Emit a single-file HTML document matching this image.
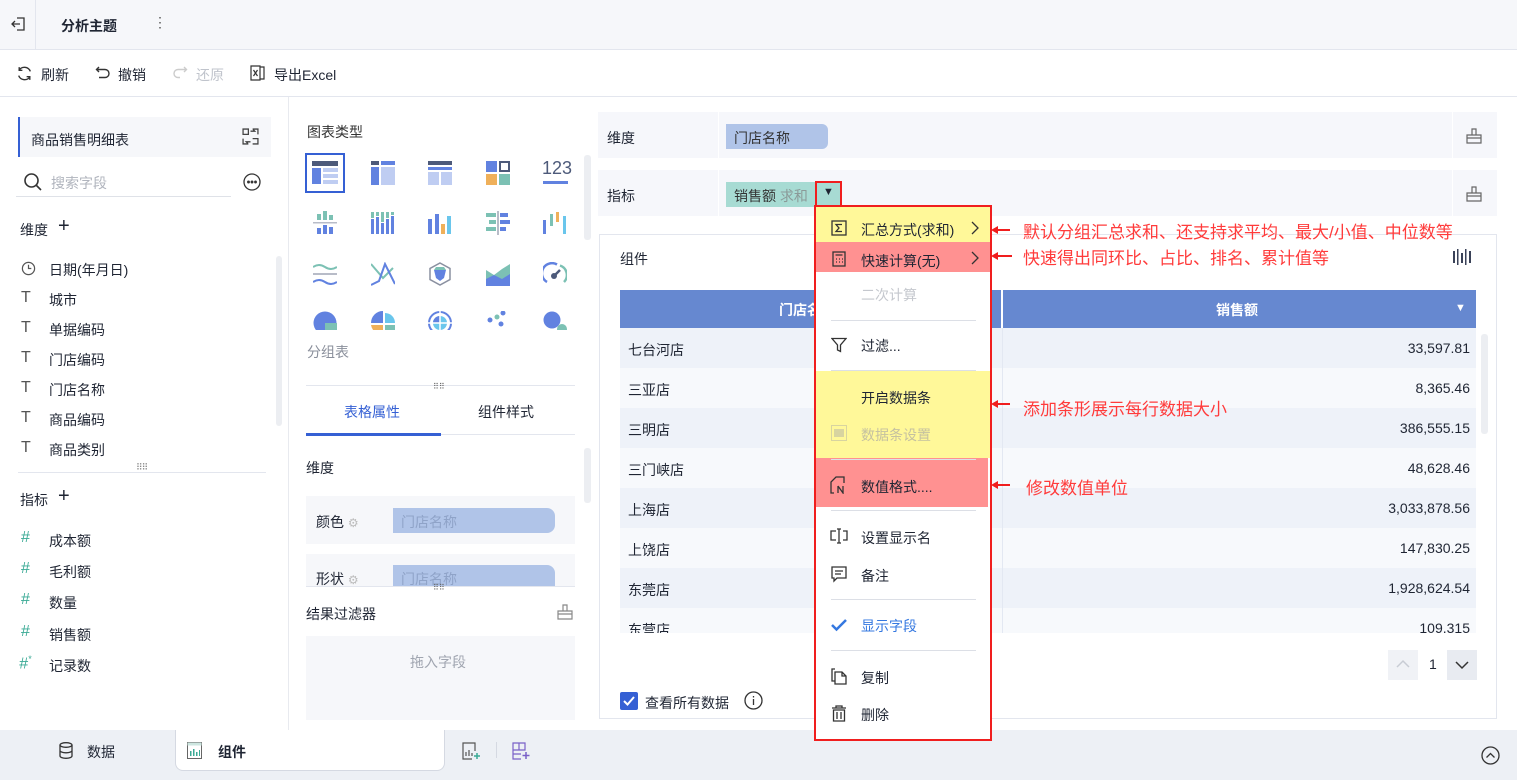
<!DOCTYPE html>
<html><head><meta charset="utf-8"><style>
*{box-sizing:border-box;margin:0;padding:0}
body{width:1517px;height:780px;overflow:hidden;background:#fff;font-family:"Liberation Sans","Noto Sans CJK SC",sans-serif;font-size:14px;color:#1f2533;position:relative}
.a{position:absolute}
.t{position:absolute;white-space:nowrap}
.ic{position:absolute}
</style></head><body>
<!-- top bar -->
<div class="a" style="left:0;top:0;width:1517px;height:50px;background:#f6f7fa;border-bottom:1px solid #e3e6ee"></div>
<div class="a" style="left:35px;top:0;width:1px;height:50px;background:#e3e6ee"></div>
<svg class="ic" style="left:11px;top:16px" width="16" height="16" viewBox="0 0 16 16" fill="none" stroke="#333" stroke-width="1.3"><path d="M6 2h7v12H6M1 8h8M4 5L1 8l3 3"/></svg>
<div class="t" style="left:61px;top:16px;font-weight:bold;font-size:14px">分析主题</div>
<div class="t" style="left:153px;top:14px;font-size:14px;color:#555">⋮</div>
<!-- toolbar -->
<div class="a" style="left:0;top:96px;width:1517px;height:1px;background:#e3e6ee"></div>
<svg class="ic" style="left:16px;top:65px" width="17" height="17" viewBox="0 0 16 16" fill="none" stroke="#333" stroke-width="1.3"><path d="M13.5 6A6 6 0 0 0 2.8 5M2.5 10a6 6 0 0 0 10.7 1M3 2v3h3M13 14v-3h-3"/></svg>
<div class="t" style="left:41px;top:65px">刷新</div>
<svg class="ic" style="left:95px;top:65px" width="16" height="16" viewBox="0 0 16 16" fill="none" stroke="#333" stroke-width="1.4"><path d="M4 2L1.5 4.5 4 7M1.5 4.5H10a4 4 0 0 1 0 8H4"/></svg>
<div class="t" style="left:118px;top:65px">撤销</div>
<svg class="ic" style="left:172px;top:65px" width="16" height="16" viewBox="0 0 16 16" fill="none" stroke="#ccc" stroke-width="1.4"><path d="M12 2l2.5 2.5L12 7M14.5 4.5H6a4 4 0 0 0 0 8h2"/></svg>
<div class="t" style="left:196px;top:65px;color:#c0c4cc">还原</div>
<svg class="ic" style="left:249px;top:65px" width="17" height="16" viewBox="0 0 17 16" fill="none" stroke="#333" stroke-width="1.2"><path d="M2 1h9v14H2zM11 2h4v12h-4M4.5 5l4 6M8.5 5l-4 6"/></svg>
<div class="t" style="left:274px;top:65px">导出Excel</div>

<!-- left panel -->
<div class="a" style="left:288px;top:97px;width:1px;height:633px;background:#e8eaef"></div>
<div class="a" style="left:18px;top:117px;width:253px;height:40px;background:#f6f7fa;border-left:2px solid #3560d4"></div>
<div class="t" style="left:31px;top:130px">商品销售明细表</div>
<svg class="ic" style="left:242px;top:128px" width="17" height="17" viewBox="0 0 16 16" fill="none" stroke="#444" stroke-width="1.2"><path d="M1 1h5v5H1zM10 10h5v5h-5M1 10v5h5M15 6V1h-5M8 3h4l-1.5-1.5M8 13H4l1.5 1.5"/></svg>
<svg class="ic" style="left:23px;top:172px" width="20" height="20" viewBox="0 0 20 20" fill="none" stroke="#333" stroke-width="1.6"><circle cx="8.5" cy="8.5" r="6.5"/><path d="M13.5 13.5L18 18"/></svg>
<div class="t" style="left:51px;top:173px;color:#b0b4bd">搜索字段</div>
<div class="a" style="left:16px;top:196px;width:215px;height:1px;background:#dfe2e8"></div>
<svg class="ic" style="left:243px;top:173px" width="18" height="18" viewBox="0 0 18 18" fill="none" stroke="#333" stroke-width="1.3"><circle cx="9" cy="9" r="8"/><circle cx="5.5" cy="9" r=".8" fill="#333"/><circle cx="9" cy="9" r=".8" fill="#333"/><circle cx="12.5" cy="9" r=".8" fill="#333"/></svg>
<div class="t" style="left:20px;top:220px">维度</div><div class="t" style="left:58px;top:215px;font-size:20px;font-weight:300">+</div>
<div class="a" style="left:276px;top:256px;width:6px;height:170px;background:#eceef2;border-radius:3px"></div>
<svg class="ic" style="left:21px;top:261px" width="15" height="15" viewBox="0 0 16 16" fill="none" stroke="#555" stroke-width="1.3"><circle cx="8" cy="8" r="6.5"/><path d="M8 4v4h3"/></svg>
<div class="t" style="left:49px;top:260px">日期(年月日)</div>
<div class="t" style="left:21px;top:289px;color:#555;font-size:16px">T</div><div class="t" style="left:49px;top:290px">城市</div>
<div class="t" style="left:21px;top:319px;color:#555;font-size:16px">T</div><div class="t" style="left:49px;top:320px">单据编码</div>
<div class="t" style="left:21px;top:349px;color:#555;font-size:16px">T</div><div class="t" style="left:49px;top:350px">门店编码</div>
<div class="t" style="left:21px;top:379px;color:#555;font-size:16px">T</div><div class="t" style="left:49px;top:380px">门店名称</div>
<div class="t" style="left:21px;top:409px;color:#555;font-size:16px">T</div><div class="t" style="left:49px;top:410px">商品编码</div>
<div class="t" style="left:21px;top:439px;color:#555;font-size:16px">T</div><div class="t" style="left:49px;top:440px">商品类别</div>
<div class="a" style="left:18px;top:472px;width:248px;height:1px;background:#e3e6ee"></div>
<div class="t" style="left:136px;top:462px;font-size:9px;color:#888;letter-spacing:-1px">⠿⠿</div>
<div class="t" style="left:20px;top:490px">指标</div><div class="t" style="left:58px;top:485px;font-size:20px;font-weight:300">+</div>
<div class="t" style="left:21px;top:529px;color:#3aaa95;font-size:16px">#</div><div class="t" style="left:49px;top:531px">成本额</div>
<div class="t" style="left:21px;top:560px;color:#3aaa95;font-size:16px">#</div><div class="t" style="left:49px;top:562px">毛利额</div>
<div class="t" style="left:21px;top:591px;color:#3aaa95;font-size:16px">#</div><div class="t" style="left:49px;top:593px">数量</div>
<div class="t" style="left:21px;top:623px;color:#3aaa95;font-size:16px">#</div><div class="t" style="left:49px;top:625px">销售额</div>
<div class="t" style="left:19px;top:654px;color:#3aaa95;font-size:16px;font-style:italic">#<sup style="font-size:9px">*</sup></div><div class="t" style="left:49px;top:656px">记录数</div>

<!-- middle panel -->
<div class="t" style="left:307px;top:122px;color:#333">图表类型</div>
<div class="a" style="left:584px;top:155px;width:7px;height:85px;background:#eceef2;border-radius:3px"></div>
<div class="a" style="left:305px;top:153px;width:40px;height:40px;border:2px solid #3560d4"></div>
<svg class="ic" style="left:312px;top:161px" width="26" height="24"><rect x="0" y="0" width="26" height="5" fill="#4d5a7a"/><rect x="0" y="7" width="9" height="16" fill="#6182e0"/><rect x="11" y="7" width="15" height="4" fill="#bfcdf2"/><rect x="11" y="13" width="15" height="4" fill="#bfcdf2"/><rect x="11" y="19" width="15" height="4" fill="#bfcdf2"/></svg>
<svg class="ic" style="left:371px;top:161px" width="24" height="24"><rect x="0" y="0" width="8" height="4" fill="#4d5a7a"/><rect x="10" y="0" width="14" height="4" fill="#6182e0"/><rect x="0" y="6" width="8" height="18" fill="#6182e0"/><rect x="10" y="6" width="14" height="18" fill="#bfcdf2"/></svg>
<svg class="ic" style="left:428px;top:161px" width="24" height="24"><rect x="0" y="0" width="24" height="4" fill="#4d5a7a"/><rect x="0" y="6" width="24" height="3" fill="#6182e0"/><rect x="0" y="11" width="11" height="13" fill="#bfcdf2"/><rect x="13" y="11" width="11" height="13" fill="#bfcdf2"/></svg>
<svg class="ic" style="left:486px;top:161px" width="24" height="24"><rect x="0" y="0" width="11" height="11" fill="#6182e0"/><rect x="14" y="1" width="9" height="9" fill="none" stroke="#4d5a7a" stroke-width="2"/><rect x="0" y="13" width="11" height="11" fill="#efb05a"/><rect x="13" y="13" width="11" height="11" fill="#7cc1b4"/></svg>
<div class="t" style="left:542px;top:158px;font-size:18px;color:#4d5a7a">123</div><div class="a" style="left:543px;top:181px;width:25px;height:3px;background:#6182e0"></div>
<svg class="ic" style="left:313px;top:211px" width="24" height="24"><rect x="4" y="3" width="4" height="6" fill="#7cc1b4"/><rect x="10" y="0" width="4" height="9" fill="#7cc1b4"/><rect x="16" y="4" width="4" height="5" fill="#7cc1b4"/><rect x="0" y="11" width="24" height="1.5" fill="#b8bcc8"/><rect x="4" y="17" width="4" height="6" fill="#6182e0"/><rect x="10" y="14" width="4" height="9" fill="#6182e0"/><rect x="16" y="16" width="4" height="7" fill="#6182e0"/></svg>
<svg class="ic" style="left:371px;top:211px" width="24" height="24"><g fill="#6182e0"><rect x="0" y="8" width="3" height="15"/><rect x="5" y="6" width="3" height="17"/><rect x="10" y="12" width="3" height="11"/><rect x="15" y="8" width="3" height="15"/><rect x="20" y="5" width="3" height="18"/></g><g fill="#7cc1b4"><rect x="0" y="1" width="3" height="6"/><rect x="5" y="1" width="3" height="4"/><rect x="10" y="1" width="3" height="10"/><rect x="15" y="1" width="3" height="6"/><rect x="20" y="1" width="3" height="3"/></g></svg>
<svg class="ic" style="left:428px;top:211px" width="24" height="24"><rect x="0" y="8" width="4" height="15" fill="#6182e0"/><rect x="7" y="3" width="4" height="20" fill="#6182e0"/><rect x="13" y="13" width="4" height="10" fill="#efb05a"/><rect x="19" y="5" width="4" height="18" fill="#6ac6ec"/></svg>
<svg class="ic" style="left:486px;top:211px" width="24" height="24"><rect x="11" y="0" width="2" height="24" fill="#b8bcc8"/><rect x="0" y="2" width="10" height="4" fill="#7cc1b4"/><rect x="14" y="2" width="8" height="4" fill="#6182e0"/><rect x="3" y="9" width="7" height="4" fill="#7cc1b4"/><rect x="14" y="9" width="10" height="4" fill="#6182e0"/><rect x="0" y="16" width="10" height="4" fill="#7cc1b4"/><rect x="14" y="16" width="6" height="4" fill="#6182e0"/></svg>
<svg class="ic" style="left:543px;top:211px" width="24" height="24"><rect x="0" y="9" width="3" height="14" fill="#6182e0"/><rect x="7" y="3" width="3" height="12" fill="#7cc1b4"/><rect x="13" y="1" width="3" height="10" fill="#efb05a"/><rect x="20" y="5" width="3" height="18" fill="#6ac6ec"/></svg>
<svg class="ic" style="left:313px;top:262px" width="24" height="24" fill="none" stroke-width="2"><path d="M0 5q6-4 12 0t12 0" stroke="#7cc1b4"/><path d="M0 12h24" stroke="#b8bcc8"/><path d="M0 20q6-4 12 0t12 0" stroke="#6182e0"/></svg>
<svg class="ic" style="left:371px;top:262px" width="24" height="24" fill="none" stroke-width="2"><path d="M0 2l12 14 10-10" stroke="#7cc1b4"/><path d="M0 23l8-4 6-17 10 20" stroke="#6182e0"/></svg>
<svg class="ic" style="left:428px;top:262px" width="24" height="24"><path d="M12 1l10 5.5v11L12 23 2 17.5v-11z" fill="none" stroke="#8a90a0" stroke-width="1.5"/><path d="M6 8l6-3 6 3-2 8-4 3-4-3z" fill="#6182e0"/><path d="M6 8h12l-2-3h-8z" fill="#7cc1b4"/></svg>
<svg class="ic" style="left:486px;top:262px" width="24" height="24"><path d="M0 8l8 5 8-6 8-5v22H0z" fill="#7cc1b4"/><path d="M0 17l8-4 8 4 8-5v12H0z" fill="#6182e0"/></svg>
<svg class="ic" style="left:543px;top:262px" width="24" height="24" fill="none" stroke-width="2.5"><path d="M4 20A10 10 0 0 1 14 2.5" stroke="#6182e0"/><path d="M17 3.5A10 10 0 0 1 21 20" stroke="#7cc1b4"/><circle cx="11" cy="14" r="3" fill="#4d5a7a" stroke="none"/><path d="M12 13l5-5" stroke="#4d5a7a"/></svg>
<div class="a" style="left:298px;top:308px;width:280px;height:22px;overflow:hidden">
<svg class="ic" style="left:15px;top:3px" width="24" height="24"><circle cx="12" cy="12" r="11.5" fill="#6182e0"/><rect x="12" y="12" width="12" height="12" fill="#7cc1b4"/></svg>
<svg class="ic" style="left:73px;top:3px" width="24" height="24"><path d="M12 0A12 12 0 0 0 0 12h12z" fill="#6182e0"/><path d="M14 2a10 10 0 0 1 10 10H14z" fill="#6ac6ec"/><path d="M0 14h12v10A12 12 0 0 1 0 14" fill="#efb05a"/><rect x="14" y="14" width="10" height="10" fill="#7cc1b4"/></svg>
<svg class="ic" style="left:130px;top:3px" width="24" height="24"><circle cx="12" cy="12" r="11" fill="none" stroke="#6182e0" stroke-width="2"/><circle cx="12" cy="12" r="7" fill="#6ac6ec"/><path d="M12 5a7 7 0 0 0-7 7h7z" fill="#6182e0"/><path d="M0 12h24M12 0v24" stroke="#fff" stroke-width="1.5"/></svg>
<svg class="ic" style="left:188px;top:3px" width="24" height="24"><circle cx="17" cy="2" r="2.5" fill="#6182e0"/><circle cx="11" cy="6" r="2.5" fill="#7cc1b4"/><circle cx="4" cy="9" r="2.5" fill="#6182e0"/><circle cx="15" cy="13" r="2.5" fill="#6182e0"/></svg>
<svg class="ic" style="left:244px;top:3px" width="26" height="24"><circle cx="10" cy="9" r="8.5" fill="#6182e0"/><circle cx="20" cy="18" r="5" fill="#7cc1b4"/></svg>
</div>
<div class="t" style="left:307px;top:342px;color:#8a8f9b">分组表</div>
<div class="a" style="left:306px;top:385px;width:269px;height:1px;background:#e3e6ee"></div>
<div class="t" style="left:433px;top:382px;font-size:8px;color:#666">⠿⠿</div>
<div class="t" style="left:344px;top:402px;color:#3560d4">表格属性</div>
<div class="t" style="left:478px;top:402px">组件样式</div>
<div class="a" style="left:306px;top:434px;width:269px;height:1px;background:#e3e6ee"></div>
<div class="a" style="left:306px;top:433px;width:135px;height:3px;background:#3560d4"></div>
<div class="a" style="left:584px;top:448px;width:7px;height:55px;background:#eceef2;border-radius:3px"></div>
<div class="t" style="left:306px;top:458px">维度</div>
<div class="a" style="left:306px;top:496px;width:269px;height:48px;background:#f6f7fa"></div>
<div class="t" style="left:316px;top:512px">颜色 <span style="color:#bbb;font-size:12px">⚙</span></div>
<div class="a" style="left:393px;top:508px;width:162px;height:25px;background:#b0c4e8;border-radius:0 8px 8px 0"></div>
<div class="t" style="left:401px;top:512px;color:#8fa3c8">门店名称</div>
<div class="a" style="left:306px;top:554px;width:269px;height:32px;background:#f6f7fa;overflow:hidden"><div class="a" style="left:87px;top:11px;width:162px;height:25px;background:#b0c4e8;border-radius:0 8px 0 0"></div><div class="t" style="left:10px;top:15px">形状 <span style="color:#bbb;font-size:12px">⚙</span></div><div class="t" style="left:95px;top:15px;color:#8fa3c8">门店名称</div></div>
<div class="a" style="left:306px;top:586px;width:269px;height:1px;background:#e3e6ee"></div>
<div class="t" style="left:433px;top:583px;font-size:8px;color:#666">⠿⠿</div>
<div class="t" style="left:306px;top:604px">结果过滤器</div>
<svg class="ic" style="left:557px;top:604px" width="16" height="16" viewBox="0 0 16 16" fill="none" stroke="#888" stroke-width="1.2"><path d="M1 7h14v8H1zM1 10h14M6 7V1h4v6"/></svg>
<div class="a" style="left:306px;top:636px;width:269px;height:84px;background:#f6f7fa"></div>
<div class="t" style="left:410px;top:652px;color:#a0a5b0">拖入字段</div>

<!-- right -->
<div class="a" style="left:598px;top:112px;width:899px;height:46px;background:#f6f7fb"></div>
<div class="a" style="left:718px;top:112px;width:1px;height:46px;background:#fff"></div>
<div class="a" style="left:1452px;top:112px;width:1px;height:46px;background:#fff"></div>
<div class="t" style="left:607px;top:128px">维度</div>
<div class="a" style="left:726px;top:124px;width:102px;height:25px;background:#b0c4e8;border-radius:0 6px 6px 0"></div>
<div class="t" style="left:734px;top:128px;color:#333">门店名称</div>
<svg class="ic" style="left:1466px;top:128px" width="16" height="16" viewBox="0 0 16 16" fill="none" stroke="#666" stroke-width="1.2"><path d="M1 7h14v8H1zM1 10h14M6 7V1h4v6"/></svg>
<div class="a" style="left:598px;top:170px;width:899px;height:46px;background:#f6f7fb"></div>
<div class="a" style="left:718px;top:170px;width:1px;height:46px;background:#fff"></div>
<div class="a" style="left:1452px;top:170px;width:1px;height:46px;background:#fff"></div>
<div class="t" style="left:607px;top:186px">指标</div>
<div class="a" style="left:726px;top:182px;width:114px;height:25px;background:#a7dbd3"></div>
<div class="t" style="left:734px;top:186px;color:#333">销售额 <span style="color:#8b9a98">求和</span></div>
<div class="a" style="left:815px;top:181px;width:27px;height:26px;border:2px solid #f01e1e"></div>
<div class="t" style="left:823px;top:186px;font-size:11px;color:#1f2533">▼</div>
<svg class="ic" style="left:1466px;top:186px" width="16" height="16" viewBox="0 0 16 16" fill="none" stroke="#666" stroke-width="1.2"><path d="M1 7h14v8H1zM1 10h14M6 7V1h4v6"/></svg>

<div class="a" style="left:599px;top:234px;width:898px;height:485px;border:1px solid #e3e6ee"></div>
<div class="t" style="left:620px;top:249px">组件</div>
<svg class="ic" style="left:1453px;top:249px" width="18" height="16"><g fill="#3a4258"><rect x="0" y="2" width="2" height="12"/><rect x="4" y="0" width="1.5" height="16"/><rect x="8" y="4" width="2" height="10"/><rect x="12" y="0" width="1.5" height="16"/><rect x="16" y="2" width="2" height="12"/></g></svg>
<div class="a" style="left:620px;top:290px;width:856px;height:38px;background:#6688d0"></div>
<div class="a" style="left:1001px;top:290px;width:2px;height:38px;background:#fff"></div>
<div class="t" style="left:779px;top:300px;color:#fff;font-weight:bold">门店名称</div>
<div class="t" style="left:1216px;top:300px;color:#fff;font-weight:bold">销售额</div>
<div class="t" style="left:1455px;top:302px;color:#fff;font-size:11px">▼</div>
<div class="a" style="left:620px;top:328px;width:856px;height:305px;overflow:hidden">
<div style="height:40px;background:#eef2f9"></div><div style="height:40px;background:#f7f9fc"></div><div style="height:40px;background:#eef2f9"></div><div style="height:40px;background:#f7f9fc"></div><div style="height:40px;background:#eef2f9"></div><div style="height:40px;background:#f7f9fc"></div><div style="height:40px;background:#eef2f9"></div><div style="height:40px;background:#f7f9fc"></div>
<div class="a" style="left:382px;top:0;width:1px;height:305px;background:#e3e8f2"></div>
<div class="t" style="left:8px;top:12px">七台河店</div><div class="t" style="right:6px;top:12px">33,597.81</div>
<div class="t" style="left:8px;top:52px">三亚店</div><div class="t" style="right:6px;top:52px">8,365.46</div>
<div class="t" style="left:8px;top:92px">三明店</div><div class="t" style="right:6px;top:92px">386,555.15</div>
<div class="t" style="left:8px;top:132px">三门峡店</div><div class="t" style="right:6px;top:132px">48,628.46</div>
<div class="t" style="left:8px;top:172px">上海店</div><div class="t" style="right:6px;top:172px">3,033,878.56</div>
<div class="t" style="left:8px;top:212px">上饶店</div><div class="t" style="right:6px;top:212px">147,830.25</div>
<div class="t" style="left:8px;top:252px">东莞店</div><div class="t" style="right:6px;top:252px">1,928,624.54</div>
<div class="t" style="left:8px;top:292px">东营店</div><div class="t" style="right:6px;top:292px">109.315</div>
</div>
<div class="a" style="left:1481px;top:334px;width:7px;height:100px;background:#eceef2;border-radius:3px"></div>
<div class="a" style="left:1388px;top:650px;width:30px;height:30px;background:#f0f2f6"></div>
<svg class="ic" style="left:1396px;top:659px" width="14" height="10" fill="none" stroke="#c8ccd4" stroke-width="1.5"><path d="M1 8l6-6 6 6"/></svg>
<div class="t" style="left:1429px;top:656px">1</div>
<div class="a" style="left:1447px;top:650px;width:30px;height:30px;background:#e8ebf1"></div>
<svg class="ic" style="left:1455px;top:660px" width="14" height="10" fill="none" stroke="#333" stroke-width="1.5"><path d="M1 2l6 6 6-6"/></svg>
<div class="a" style="left:620px;top:692px;width:18px;height:18px;background:#3560d4;border-radius:2px"></div>
<svg class="ic" style="left:622px;top:694px" width="14" height="14" fill="none" stroke="#fff" stroke-width="2"><path d="M2 7l3.5 3.5L12 3"/></svg>
<div class="t" style="left:645px;top:693px">查看所有数据</div>
<svg class="ic" style="left:744px;top:691px" width="19" height="19" fill="none" stroke="#333" stroke-width="1.3"><circle cx="9.5" cy="9.5" r="8.5"/><path d="M9.5 8v6M9.5 5v1.5"/></svg>

<!-- bottom bar -->
<div class="a" style="left:0;top:730px;width:1517px;height:50px;background:#edf0f5"></div>
<div class="a" style="left:175px;top:730px;width:270px;height:41px;background:#fff;border:1px solid #d5d9e2;border-top:none;border-radius:0 0 8px 8px"></div>
<svg class="ic" style="left:59px;top:742px" width="14" height="17" fill="none" stroke="#333" stroke-width="1.3"><ellipse cx="7" cy="3" rx="6" ry="2.3"/><path d="M1 3v11c0 1.3 2.7 2.3 6 2.3s6-1 6-2.3V3M1 8.5c0 1.3 2.7 2.3 6 2.3s6-1 6-2.3"/></svg>
<div class="t" style="left:87px;top:742px">数据</div>
<svg class="ic" style="left:187px;top:742px" width="15" height="17"><rect x=".5" y=".5" width="14" height="16" fill="none" stroke="#666"/><rect x=".5" y=".5" width="14" height="3" fill="#cde6e0"/><g fill="#3aaa95"><rect x="3" y="9" width="1.5" height="5"/><rect x="6" y="7" width="1.5" height="7"/><rect x="9" y="10" width="1.5" height="4"/><rect x="12" y="8" width="1" height="6"/></g></svg>
<div class="t" style="left:218px;top:742px;font-weight:bold">组件</div>
<svg class="ic" style="left:462px;top:742px" width="20" height="18" fill="none" stroke="#555" stroke-width="1.2"><path d="M13 9V1H1v16h9M4 14V10M7 14V8M10 14v-3"/><path d="M15 11v6M12 14h6" stroke="#3aaa95" stroke-width="1.5"/></svg>
<div class="a" style="left:496px;top:742px;width:1px;height:16px;background:#d5d9e2"></div>
<svg class="ic" style="left:512px;top:742px" width="20" height="18" fill="none" stroke="#7a60c8" stroke-width="1.2"><path d="M1 1h12v7H1zM1 8v9h8M7 1v7M1 12h8"/><path d="M14 10v7M10.5 13.5h7" stroke-width="1.5"/></svg>
<svg class="ic" style="left:1481px;top:746px" width="19" height="19" fill="none" stroke="#333" stroke-width="1.3"><circle cx="9.5" cy="9.5" r="8.5"/><path d="M5.5 11.5l4-4 4 4"/></svg>

<!-- menu -->
<div class="a" style="left:814px;top:205px;width:178px;height:536px;background:#fff;border:2px solid #f01e1e"></div>
<div class="a" style="left:816px;top:207px;width:174px;height:35px;background:#fff899"></div>
<div class="a" style="left:816px;top:242px;width:174px;height:30px;background:#ff9191"></div>
<div class="a" style="left:816px;top:371px;width:174px;height:87px;background:#fff899"></div>
<div class="a" style="left:816px;top:458px;width:172px;height:49px;background:#ff9191"></div>
<div class="a" style="left:831px;top:320px;width:145px;height:1px;background:#dcdfe6"></div>
<div class="a" style="left:831px;top:370px;width:145px;height:1px;background:#dcdfe6"></div>
<div class="a" style="left:831px;top:459px;width:145px;height:1px;background:#dcdfe6"></div>
<div class="a" style="left:831px;top:510px;width:145px;height:1px;background:#dcdfe6"></div>
<div class="a" style="left:831px;top:599px;width:145px;height:1px;background:#dcdfe6"></div>
<div class="a" style="left:831px;top:650px;width:145px;height:1px;background:#dcdfe6"></div>
<svg class="ic" style="left:831px;top:220px" width="16" height="16" fill="none" stroke="#333" stroke-width="1.3"><rect x="1" y="1" width="14" height="14"/><path d="M11 4.5H5l3 3.5-3 3.5h6"/></svg>
<div class="t" style="left:861px;top:220px">汇总方式(求和)</div>
<svg class="ic" style="left:971px;top:221px" width="8" height="14" fill="none" stroke="#333" stroke-width="1.3"><path d="M1 1l6 6-6 6"/></svg>
<svg class="ic" style="left:831px;top:251px" width="16" height="16" fill="none" stroke="#333" stroke-width="1.3"><rect x="2" y="1" width="12" height="14"/><path d="M4.5 4h7M5 8h1M8 8h1M11 8h1M5 11h1M8 11h1M11 11h1"/></svg>
<div class="t" style="left:861px;top:251px">快速计算(无)</div>
<svg class="ic" style="left:971px;top:251px" width="8" height="14" fill="none" stroke="#333" stroke-width="1.3"><path d="M1 1l6 6-6 6"/></svg>
<div class="t" style="left:861px;top:285px;color:#c5c8ce">二次计算</div>
<svg class="ic" style="left:831px;top:337px" width="16" height="16" fill="none" stroke="#333" stroke-width="1.3"><path d="M1 1.5h14L9.5 8v6.5l-3-1.5V8z"/></svg>
<div class="t" style="left:861px;top:336px">过滤...</div>
<div class="t" style="left:861px;top:388px">开启数据条</div>
<svg class="ic" style="left:831px;top:425px" width="16" height="16"><rect x=".5" y=".5" width="15" height="15" fill="none" stroke="#d8d4a0"/><rect x="3" y="4" width="10" height="8" fill="#d8d4a0"/></svg>
<div class="t" style="left:861px;top:425px;color:#c5c1a0">数据条设置</div>
<svg class="ic" style="left:830px;top:476px" width="18" height="18" fill="none" stroke="#333" stroke-width="1.3"><path d="M4 17H1V6l5-5h8v6M8 10v7M8 10l5 7v-7"/></svg>
<div class="t" style="left:861px;top:477px">数值格式....</div>
<svg class="ic" style="left:830px;top:528px" width="18" height="16" fill="none" stroke="#333" stroke-width="1.3"><path d="M6 3H1v9h5M13 3h4v9h-4M9 1v14M7 1h4M7 15h4"/></svg>
<div class="t" style="left:861px;top:528px">设置显示名</div>
<svg class="ic" style="left:831px;top:566px" width="16" height="17" fill="none" stroke="#333" stroke-width="1.3"><path d="M1 1h14v11H6l-3 3v-3H1zM4 5h8M4 8h6"/></svg>
<div class="t" style="left:861px;top:566px">备注</div>
<svg class="ic" style="left:831px;top:618px" width="16" height="14" fill="none" stroke="#3578e0" stroke-width="2.5"><path d="M1 7l4.5 4.5L15 2"/></svg>
<div class="t" style="left:861px;top:616px;color:#3578e0">显示字段</div>
<svg class="ic" style="left:831px;top:668px" width="16" height="17" fill="none" stroke="#333" stroke-width="1.3"><path d="M4 1H1v12h3M4 4h7l4 4v8H4zM11 4v4h4"/></svg>
<div class="t" style="left:861px;top:668px">复制</div>
<svg class="ic" style="left:831px;top:705px" width="16" height="17" fill="none" stroke="#333" stroke-width="1.3"><path d="M1 3h14M5 3V1h6v2M2.5 5h11v11h-11zM6 7v7M10 7v7"/></svg>
<div class="t" style="left:861px;top:705px">删除</div>

<!-- annotations -->
<svg class="ic" style="left:990px;top:220px" width="30" height="280" fill="#f01e1e" stroke="#f01e1e" stroke-width="2"><path d="M4 10h16M22 36H4M4 184h16M4 265h16"/><path d="M1 10l7-4v8zM1 36l7-4v8zM1 184l7-4v8zM1 265l7-4v8z" stroke="none"/></svg>
<div class="t" style="left:1023px;top:218px;color:#ff3b3b;font-size:17px">默认分组汇总求和、还支持求平均、最大/小值、中位数等</div>
<div class="t" style="left:1023px;top:244px;color:#ff3b3b;font-size:17px">快速得出同环比、占比、排名、累计值等</div>
<div class="t" style="left:1023px;top:395px;color:#ff3b3b;font-size:17px">添加条形展示每行数据大小</div>
<div class="t" style="left:1026px;top:474px;color:#ff3b3b;font-size:17px">修改数值单位</div>
</body></html>
